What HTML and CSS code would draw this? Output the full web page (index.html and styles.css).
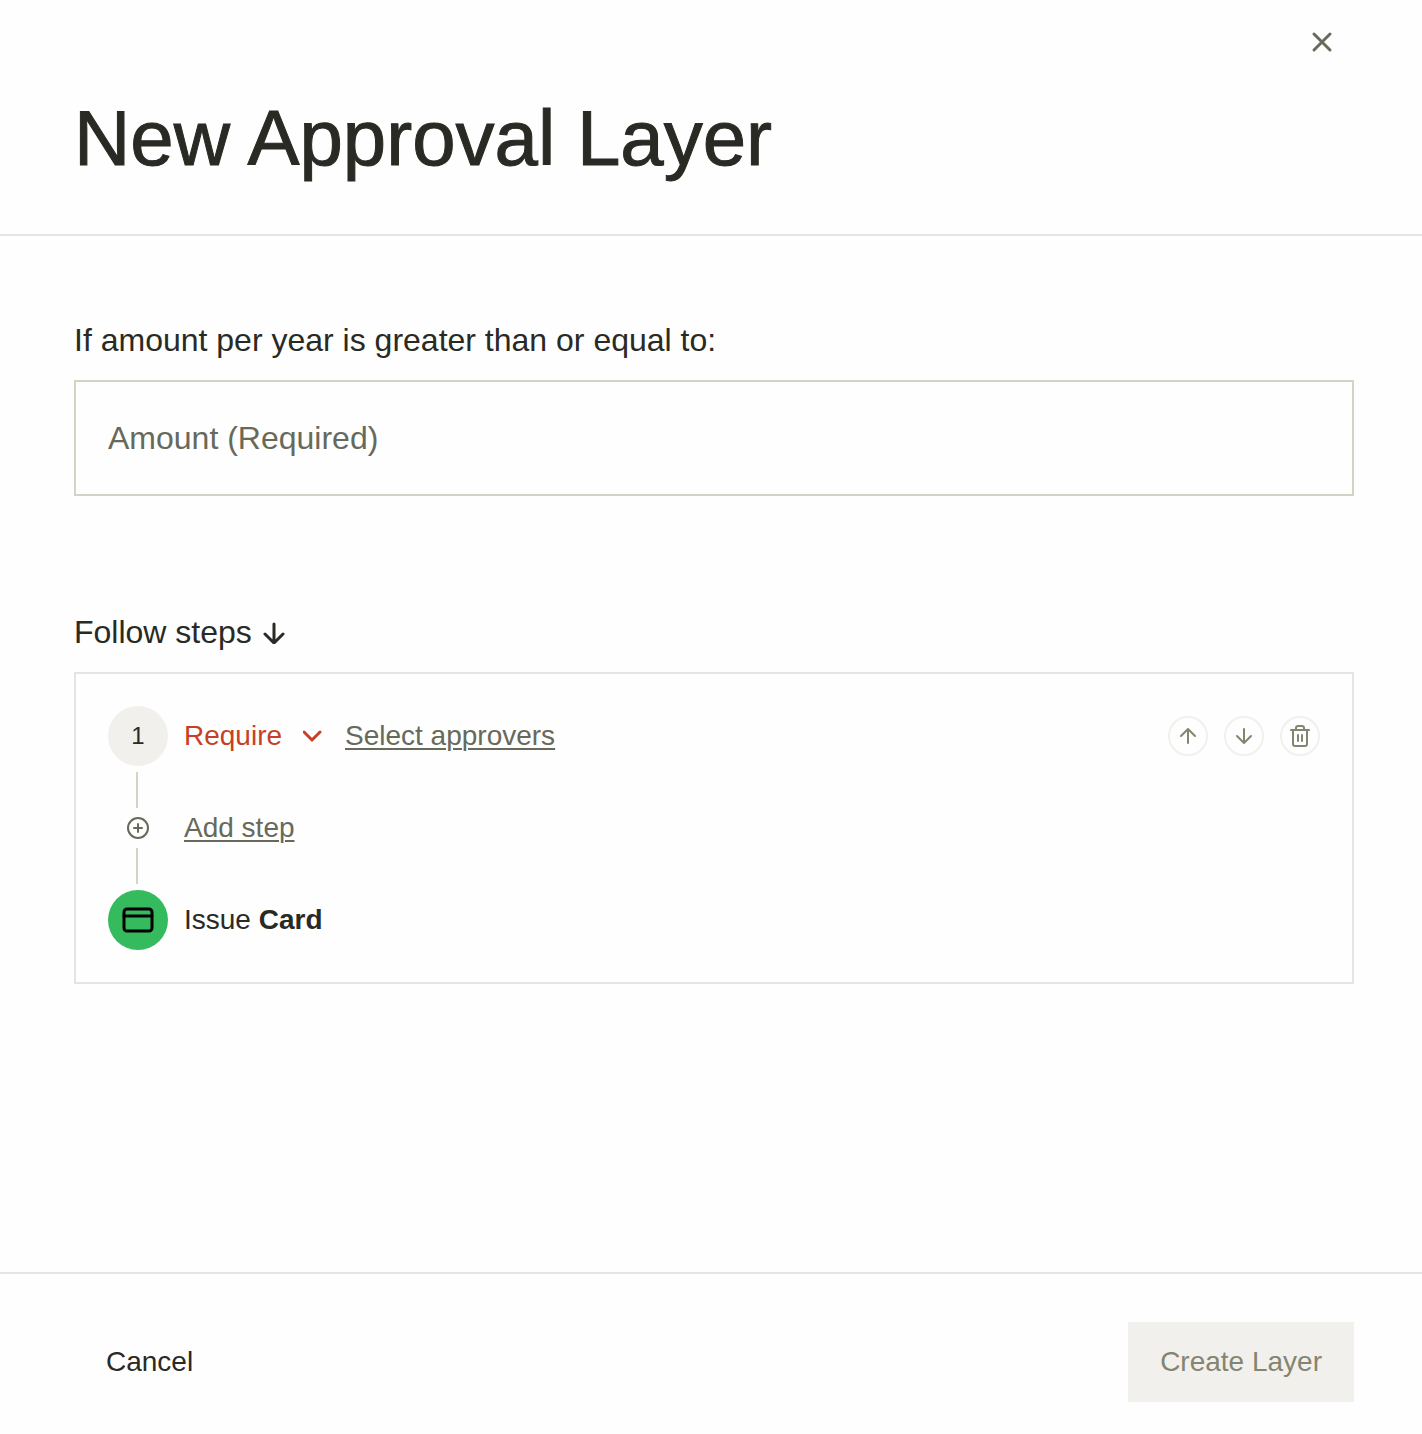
FILE: index.html
```
<!DOCTYPE html>
<html lang="en">

<head>
    <meta charset="UTF-8">
    <meta name="viewport" content="width=device-width, initial-scale=1.0">
    <title>New Approval Layer</title>
    <link rel="stylesheet" href="styles.css">
</head>

<body>
    <form class="dialog">
        <header class="dialog-header">
            <button class="close-btn" type="button" aria-label="Close">
                <svg width="24" height="24" viewBox="0 0 24 24"><path d="M4 4l16 16M20 4L4 20" stroke-width="3"/></svg>
            </button>
            <h1>New Approval Layer</h1>
        </header>

        <main class="dialog-body">
            <section class="field">
                <label class="label" for="amount">If amount per year is greater than or equal to:</label>
                <input class="amount" id="amount" type="text" placeholder="Amount (Required)" required>
            </section>

            <section class="field">
                <h2 class="label">Follow steps
                    <svg width="24" height="24" viewBox="0 0 24 24"><path d="M12 4v19M3 14l9 9 9-9" stroke-width="3"/></svg>
                </h2>
                <div class="steps">
                    <div class="step">
                        <span class="circle">1</span>
                        <div class="select-wrap">
                            <select class="rule" aria-label="Rule">
                                <option>Require</option>
                                <option>Notify</option>
                            </select>
                            <svg width="20" height="20" viewBox="0 0 20 20"><path d="M1 6l8 8 8-8" stroke-width="3"/></svg>
                        </div>
                        <a class="link" href="#">Select approvers</a>
                        <div class="actions">
                            <button class="round-btn" type="button" aria-label="Move up">
                                <svg width="24" height="24" viewBox="0 0 24 24"><path d="M12 19V5M5 12l7-7 7 7"/></svg>
                            </button>
                            <button class="round-btn" type="button" aria-label="Move down">
                                <svg width="24" height="24" viewBox="0 0 24 24"><path d="M12 5v14M5 12l7 7 7-7"/></svg>
                            </button>
                            <button class="round-btn" type="button" aria-label="Delete step">
                                <svg width="24" height="24" viewBox="0 0 24 24"><path d="M3 6h18M8 6V4q0-2 2-2h4q2 0 2 2v2M5 6v14q0 2 2 2h10q2 0 2-2V6M10 11v6M14 11v6"/></svg>
                            </button>
                        </div>
                    </div>
                    <div class="line"></div>
                    <div class="step step-add">
                        <svg class="plus" width="24" height="24" viewBox="0 0 24 24"><circle cx="12" cy="12" r="10"/><path d="M12 8v8M8 12h8"/></svg>
                        <a class="link" href="#">Add step</a>
                    </div>
                    <div class="line"></div>
                    <div class="step">
                        <span class="circle circle-green">
                            <svg width="32" height="28" viewBox="0 0 32 28"><rect x="2" y="3" width="28" height="22" rx="3" stroke-width="3"/><path d="M2 10h28" stroke-width="3"/></svg>
                        </span>
                        <span>Issue <strong>Card</strong></span>
                    </div>
                </div>
            </section>
        </main>

        <footer class="dialog-footer">
            <button class="btn" type="button">Cancel</button>
            <button class="btn btn-create" type="submit" disabled>Create Layer</button>
        </footer>
    </form>
</body>

</html>
```
FILE: styles.css
```
* {
    box-sizing: border-box;
}

body {
    margin: 0;
    background-color: #fefefe;
    color: #292a24;
    font-family: "Liberation Sans", Arial, sans-serif;
    font-size: 28px;
    line-height: 40px;
}

button,
input,
select {
    font: inherit;
    color: inherit;
}

button {
    cursor: pointer;
}

svg {
    display: block;
    flex: none;
    fill: none;
    stroke: currentColor;
    stroke-width: 2;
    stroke-linecap: round;
    stroke-linejoin: round;
}

.dialog {
    display: flex;
    flex-direction: column;
    min-height: 100vh;
}

.dialog-header {
    display: flex;
    flex-direction: column;
    padding: 22px 68px 48px 74px;
    border-bottom: 2px solid #e5e4e0;
}

.close-btn {
    align-self: flex-end;
    margin-right: 12px;
    padding: 8px;
    border: none;
    background: none;
    color: #67695a;
}

h1 {
    margin: 28px 0 0;
    font-size: 78px;
    font-weight: 400;
    line-height: 96px;
    /* medium weight */
    -webkit-text-stroke: 1px currentColor;
}

.dialog-body {
    display: flex;
    flex-direction: column;
    flex: 1;
    gap: 112px;
    padding: 80px 68px 80px 74px;
}

.field {
    display: flex;
    flex-direction: column;
    gap: 16px;
}

.label {
    display: flex;
    align-items: center;
    gap: 10px;
    margin: 0;
    font-size: 32px;
    font-weight: 400;
    line-height: 48px;
}

.amount {
    width: 100%;
    padding: 32px;
    border: 2px solid #d5d4c4;
    border-radius: 0;
    background: none;
    line-height: 48px;
    font-size: 32px;
}

.amount::placeholder {
    color: #67695a;
    opacity: 1;
}

.steps {
    padding: 32px;
    border: 2px solid #e5e4e0;
}

.step {
    display: flex;
    align-items: center;
    gap: 16px;
}

.circle {
    display: flex;
    align-items: center;
    justify-content: center;
    width: 60px;
    height: 60px;
    border-radius: 50%;
    background-color: #f1f0ec;
    font-size: 24px;
}

.circle-green {
    background-color: #35bb5d;
    color: #000;
}

.select-wrap {
    display: grid;
    align-items: center;
    margin-right: 6px;
    color: #c74026;
}

.select-wrap > * {
    grid-area: 1 / 1;
}

.select-wrap svg {
    justify-self: end;
    pointer-events: none;
}

.rule {
    padding: 0 40px 0 0;
    border: none;
    background: none;
    appearance: none;
}

.link {
    color: #67695a;
    text-decoration-thickness: 2px;
    text-underline-offset: 3px;
}

.actions {
    display: flex;
    gap: 16px;
    margin-left: auto;
}

.round-btn {
    display: flex;
    align-items: center;
    justify-content: center;
    width: 40px;
    height: 40px;
    padding: 0;
    border: 2px solid #f1f0ec;
    border-radius: 50%;
    background: none;
    color: #848570;
}

.line {
    width: 2px;
    height: 36px;
    margin: 6px 28px;
    background-color: #d5d4c4;
}

.step-add {
    height: 40px;
    margin: -6px 0;
    color: #67695a;
}

.plus {
    margin: 0 18px;
}

.dialog-footer {
    display: flex;
    justify-content: space-between;
    padding: 48px 68px 32px 74px;
    border-top: 2px solid #e5e4e0;
}

.btn {
    padding: 20px 32px;
    border: none;
    background: none;
}

.btn-create {
    background-color: #f1f0ec;
    color: #848570;
    cursor: default;
}
```
